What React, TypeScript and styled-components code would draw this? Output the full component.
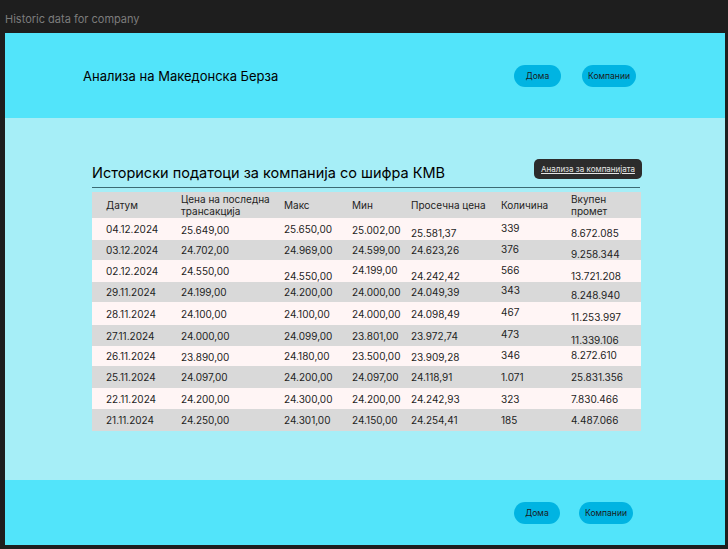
import styled, { createGlobalStyle } from "styled-components";

const GlobalStyle = createGlobalStyle`
    body {
        margin: 0;
        background-color: #1e1e1e;
        font-family: Inter, "Noto Sans", sans-serif;
    }
`;

const Page = styled.div`
    padding: 0 5px;
    height: 549px;
    box-sizing: border-box;
`;

const FrameLabel = styled.div`
    height: 33px;
    padding-top: 5px;
    box-sizing: border-box;
    display: flex;
    align-items: center;
    font-size: 11px;
    color: #7c7c7c;
`;

const Frame = styled.div`
    width: 720px;
    height: 512px;
    display: flex;
    flex-direction: column;
`;

const Bar = styled.header<{ $h: number; $right: number; $gap: number }>`
    height: ${(p) => p.$h}px;
    background-color: #52e4fa;
    display: flex;
    align-items: center;
    padding: 0 ${(p) => p.$right}px 0 78px;
    gap: ${(p) => p.$gap}px;
    flex-shrink: 0;
`;

const SiteTitle = styled.h1`
    margin: 0 auto 0 0;
    font-size: 13px;
    font-weight: 400;
    color: #000;
`;

const NavButton = styled.button<{ $w: number }>`
    width: ${(p) => p.$w}px;
    height: 22px;
    border: none;
    border-radius: 11px;
    background-color: #00b4e2;
    color: #1a1a1a;
    font-family: Inter, sans-serif;
    font-size: 8.5px;
    padding: 0;
    cursor: pointer;
`;

const Main = styled.main`
    flex: 1;
    background-color: #a6eef7;
    padding: 41px 0 0 87px;
`;

const Content = styled.section`
    width: 549px;
`;

const TitleRow = styled.div`
    height: 28px;
    display: flex;
    justify-content: space-between;
    border-bottom: 1px solid #3b6b74;
    margin-right: 1px;
`;

const PageTitle = styled.h2`
    margin: 0;
    align-self: flex-end;
    padding-bottom: 5px;
    font-size: 14.5px;
    line-height: 18px;
    font-weight: 400;
    color: #000;
`;

const DarkButton = styled.button`
    height: 20px;
    width: 108px;
    margin-right: -2px;
    border: none;
    border-radius: 5px;
    background-color: #2c2c2c;
    color: #e6e6e6;
    font-family: Inter, sans-serif;
    font-size: 8px;
    text-decoration: underline;
    padding: 0;
    cursor: pointer;
`;

const Table = styled.div`
    margin-top: 4px;
    display: flex;
    flex-direction: column;
`;

const Row = styled.div<{ $h: number; $alt: boolean }>`
    display: grid;
    grid-template-columns: 89px 103px 68px 59px 90px 70px 70px;
    height: ${(p) => p.$h}px;
    background-color: ${(p) => (p.$alt ? "#d9d9d9" : "#fff5f5")};
    font-size: 10px;
    color: #1e1e1e;
`;

// $shift moves the text down (or up, when negative) by that many pixels
const Cell = styled.div<{ $shift?: number }>`
    display: flex;
    align-items: center;
    line-height: 12px;
    padding-top: ${(p) => Math.max(0, p.$shift ?? 0) * 2}px;
    padding-bottom: ${(p) => Math.max(0, -(p.$shift ?? 0)) * 2}px;
    &:first-child {
        padding-left: 14px;
    }
`;

const columns = [
    "Датум",
    "Цена на последна трансакција",
    "Макс",
    "Мин",
    "Просечна цена",
    "Количина",
    "Вкупен промет",
];

type Entry = { h: number; v: string[]; s?: number[] };

const rows: Entry[] = [
    { h: 22, v: ["04.12.2024", "25.649,00", "25.650,00", "25.002,00", "25.581,37", "339", "8.672.085"], s: [0, 1, 0, 1, 4, -1, 4] },
    { h: 20, v: ["03.12.2024", "24.702,00", "24.969,00", "24.599,00", "24.623,26", "376", "9.258.344"], s: [0, 0, 0, 0, 0, -1, 4] },
    { h: 22, v: ["02.12.2024", "24.550,00", "24.550,00", "24.199,00", "24.242,42", "566", "13.721.208"], s: [0, 0, 5, -1, 5, -1, 5] },
    { h: 20, v: ["29.11.2024", "24.199,00", "24.200,00", "24.000,00", "24.049,39", "343", "8.248.940"], s: [0, 0, 0, 0, 0, -2, 3] },
    { h: 23, v: ["28.11.2024", "24.100,00", "24.100,00", "24.000,00", "24.098,49", "467", "11.253.997"], s: [0, 0, 0, 0, 0, -2, 3] },
    { h: 21, v: ["27.11.2024", "24.000,00", "24.099,00", "23.801,00", "23.972,74", "473", "11.339.106"], s: [0, 0, 0, 0, 0, -2, 4] },
    { h: 20, v: ["26.11.2024", "23.890,00", "24.180,00", "23.500,00", "23.909,28", "346", "8.272.610"], s: [0, 1, 0, 0, 1, -1, -1] },
    { h: 22, v: ["25.11.2024", "24.097,00", "24.200,00", "24.097,00", "24.118,91", "1.071", "25.831.356"] },
    { h: 21, v: ["22.11.2024", "24.200,00", "24.300,00", "24.200,00", "24.242,93", "323", "7.830.466"] },
    { h: 22, v: ["21.11.2024", "24.250,00", "24.301,00", "24.150,00", "24.254,41", "185", "4.487.066"] },
];

function Nav({ gap, right, h, widths, title }: { gap: number; right: number; h: number; widths: [number, number]; title?: string }) {
    return (
        <Bar $h={h} $right={right} $gap={gap}>
            <SiteTitle>{title}</SiteTitle>
            <NavButton $w={widths[0]}>Дома</NavButton>
            <NavButton $w={widths[1]}>Компании</NavButton>
        </Bar>
    );
}

export default function App() {
    return (
        <Page>
            <GlobalStyle />
            <FrameLabel>Historic data for company</FrameLabel>
            <Frame>
                <Nav h={85} right={89} gap={21} widths={[47, 54]} title="Анализа на Македонска Берза" />
                <Main>
                    <Content>
                        <TitleRow>
                            <PageTitle>Историски податоци за компанија со шифра КМВ</PageTitle>
                            <DarkButton>Анализа за компанијата</DarkButton>
                        </TitleRow>
                        <Table>
                            <Row $h={26} $alt>
                                {columns.map((c) => (
                                    <Cell key={c}>{c}</Cell>
                                ))}
                            </Row>
                            {rows.map((r, i) => (
                                <Row key={r.v[0]} $h={r.h} $alt={i % 2 === 1}>
                                    {r.v.map((val, j) => (
                                        <Cell key={j} $shift={r.s ? r.s[j] : 0}>
                                            {val}
                                        </Cell>
                                    ))}
                                </Row>
                            ))}
                        </Table>
                    </Content>
                </Main>
                <Nav h={65} right={92} gap={19} widths={[46, 54]} />
            </Frame>
        </Page>
    );
}
